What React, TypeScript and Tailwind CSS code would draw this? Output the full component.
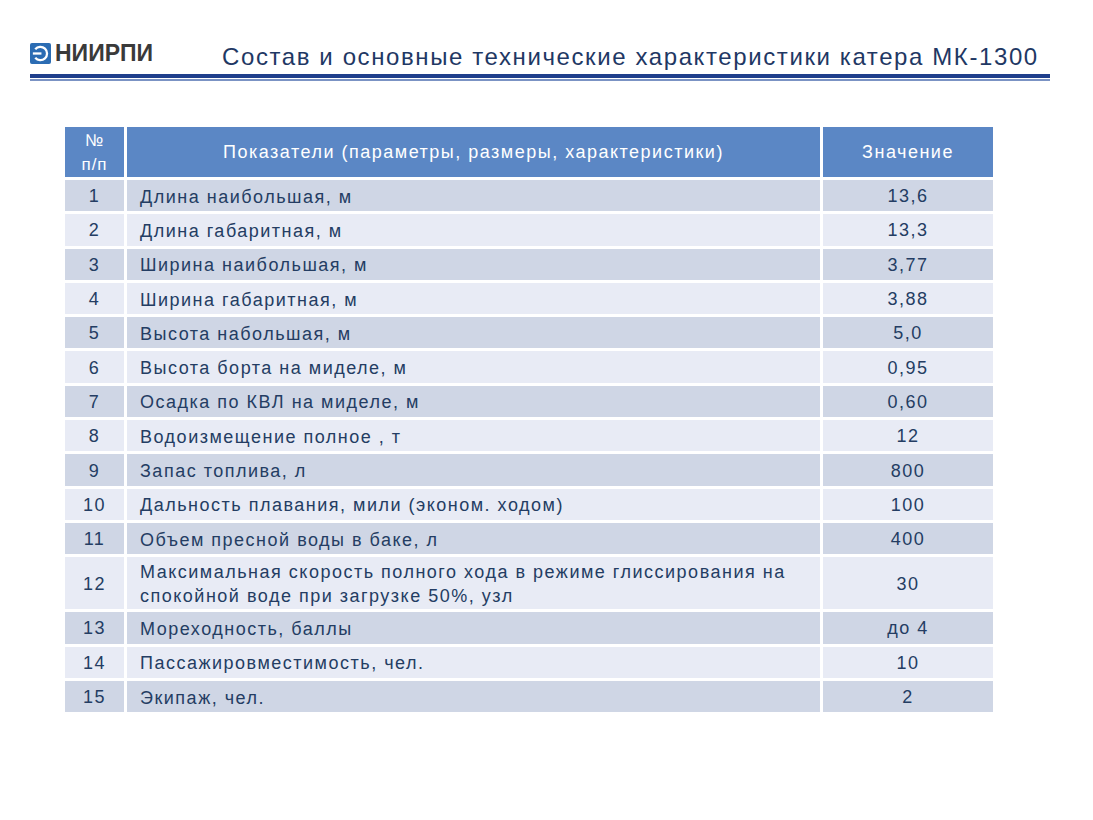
import React from "react";

const rows: [string, string, string][] = [
  ["1", "Длина наибольшая, м", "13,6"],
  ["2", "Длина габаритная, м", "13,3"],
  ["3", "Ширина наибольшая, м", "3,77"],
  ["4", "Ширина габаритная, м", "3,88"],
  ["5", "Высота набольшая, м", "5,0"],
  ["6", "Высота борта на миделе, м", "0,95"],
  ["7", "Осадка по КВЛ на миделе, м", "0,60"],
  ["8", "Водоизмещение полное , т", "12"],
  ["9", "Запас топлива, л", "800"],
  ["10", "Дальность плавания, мили (эконом. ходом)", "100"],
  ["11", "Объем пресной воды в баке, л", "400"],
  [
    "12",
    "Максимальная скорость полного хода в режиме глиссирования на спокойной воде при загрузке 50%, узл",
    "30",
  ],
  ["13", "Мореходность, баллы", "до 4"],
  ["14", "Пассажировместимость, чел.", "10"],
  ["15", "Экипаж, чел.", "2"],
];

function Logo() {
  return (
    <svg width="21" height="21" viewBox="0 0 22 22">
      <rect x="0" y="0" width="22" height="22" rx="2" fill="#2b6cb3" />
      <path
        d="M5.5 6.5 A7 7 0 1 1 5.5 15.5"
        fill="none"
        stroke="#fff"
        strokeWidth="2.4"
      />
      <path d="M3 11 H12" stroke="#fff" strokeWidth="2.4" />
    </svg>
  );
}

export default function App() {
  return (
    <div
      className="h-[820px] w-[1093px] bg-white"
      style={{ fontFamily: '"Liberation Sans", Arial, sans-serif' }}
    >
      {/* шапка */}
      <div className="flex items-center pl-[30px] pt-[37px]">
        <div className="flex w-[192px] items-center gap-[4px]">
          <Logo />
          <span className="text-[23px] font-bold leading-none text-[#3a3a3a]">НИИРПИ</span>
        </div>
        <h1 className="mt-[8px] text-[24px] leading-none tracking-[1.6px] text-[#1f3864]">
          Состав и основные технические характеристики катера МК-1300
        </h1>
      </div>
      <div className="ml-[30px] mt-[5px] w-[1020px]">
        <div className="h-[4px] bg-[#1f3f8c]" />
        <div className="mt-[1px] h-[2px] bg-[#7b93c4]" />
      </div>

      {/* таблица */}
      <div className="ml-[65px] mt-[46px] grid w-[928px] grid-cols-[59px_693px_170px] gap-[3px] text-[18px] tracking-[1.5px] text-[#243d63]">
        <div className="flex h-[50px] flex-col items-center justify-center bg-[#5b87c5] pt-[2px] text-[17px] leading-[24px] tracking-[1px] text-white">
          <span>№</span>
          <span>п/п</span>
        </div>
        <div className="flex h-[50px] items-center justify-center bg-[#5b87c5] text-white">
          Показатели (параметры, размеры, характеристики)
        </div>
        <div className="flex h-[50px] items-center justify-center bg-[#5b87c5] text-white">
          Значение
        </div>
        {rows.map(([n, label, value], i) => {
          const bg = i % 2 === 0 ? "bg-[#cfd6e5]" : "bg-[#e8ebf5]";
          const h = n === "12" ? "h-[52px]" : "h-[31.3px]";
          return (
            <React.Fragment key={n}>
              <div className={`flex items-center justify-center pt-[2px] ${bg} ${h}`}>{n}</div>
              <div className={`flex items-center pl-[13px] pr-[4px] pt-[2px] leading-[24px] ${bg} ${h}`}>
                {label}
              </div>
              <div className={`flex items-center justify-center pt-[2px] ${bg} ${h}`}>{value}</div>
            </React.Fragment>
          );
        })}
      </div>
    </div>
  );
}
